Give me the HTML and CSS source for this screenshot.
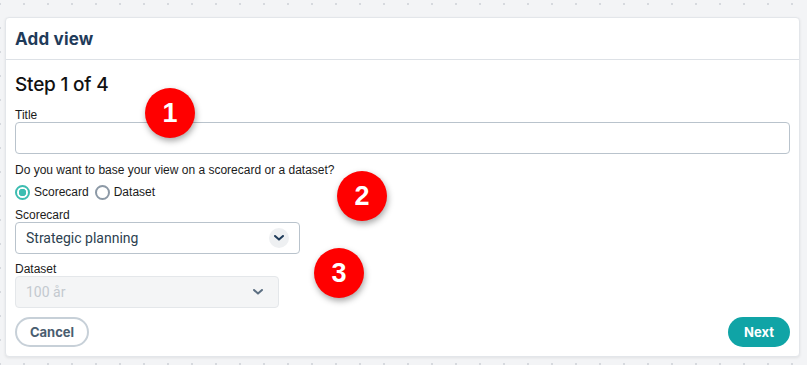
FILE: index.html
```html
<!DOCTYPE html>
<html lang="en">
<head>
  <meta charset="UTF-8" />
  <meta name="viewport" content="width=device-width, initial-scale=1.0"/>
  <title>Add view</title>
  <link rel="stylesheet" href="styles.css">
</head>
<body>
  <div class="dialog">
    <div class="dialog-header">Add view</div>
    <div class="dialog-body">
      <h3 class="step">Step 1 of 4</h3>

      <label class="field-label" for="title">Title</label>
      <input class="text-input" id="title" type="text" />

      <p class="question">Do you want to base your view on a scorecard or a dataset?</p>
      <div class="radio-row">
        <label class="radio checked"><span class="radio-dot"></span>Scorecard</label>
        <label class="radio"><span class="radio-dot"></span>Dataset</label>
      </div>

      <label class="field-label">Scorecard</label>
      <div class="select select-scorecard">
        <span>Strategic planning</span>
        <span class="chevron-bubble">
          <svg viewBox="0 0 10 6" width="10" height="6"><path d="M1 1 L5 4.6 L9 1" fill="none" stroke="#1f3b5a" stroke-width="2" stroke-linecap="round" stroke-linejoin="round"/></svg>
        </span>
      </div>

      <label class="field-label">Dataset</label>
      <div class="select select-dataset">
        <span>100 år</span>
        <span class="chevron-plain">
          <svg viewBox="0 0 10 6" width="10" height="6"><path d="M1 1 L5 4.6 L9 1" fill="none" stroke="#5c6f82" stroke-width="2" stroke-linecap="round" stroke-linejoin="round"/></svg>
        </span>
      </div>

      <div class="actions">
        <button class="btn btn-cancel">Cancel</button>
        <button class="btn btn-next">Next</button>
      </div>
    </div>

    <span class="marker marker-1">1</span>
    <span class="marker marker-2">2</span>
    <span class="marker marker-3">3</span>
  </div>
</body>
</html>
```

FILE: styles.css
```css
body {
  margin: 0;
  padding: 17px 7px 0 5px;
  min-height: 365px;
  box-sizing: border-box;
  background-color: #f3f4f6;
  background-image: radial-gradient(circle, #d6d9de 1px, transparent 1.4px);
  background-size: 24px 24px;
  background-position: -12px -8px;
  font-family: "Liberation Sans", Arial, sans-serif;
  color: #1b1b1b;
}

.dialog {
  position: relative;
  background: #ffffff;
  border: 1px solid #e3e6ea;
  border-radius: 4px;
  box-shadow: 0 1px 3px rgba(0, 0, 0, 0.08);
  height: 340px;
  box-sizing: border-box;
}

.dialog-header {
  height: 41px;
  display: flex;
  align-items: center;
  padding-left: 9px;
  border-bottom: 1px solid #dde1e6;
  font-family: Inter, "Noto Sans", sans-serif;
  font-weight: 700;
  font-size: 17px;
  letter-spacing: 0.2px;
  color: #1f3b5a;
}

.dialog-body {
  display: flex;
  flex-direction: column;
  padding: 0 9px;
}

.step {
  margin: 13px 0 0;
  height: 24px;
  line-height: 24px;
  font-family: Inter, "Noto Sans", sans-serif;
  font-weight: 500;
  font-size: 19px;
  letter-spacing: -0.2px;
  color: #111;
}

.field-label {
  display: block;
  font-size: 12px;
  line-height: 14px;
  height: 14px;
  margin-top: 11px;
}

.text-input {
  margin: 0;
  height: 32px;
  box-sizing: border-box;
  border: 1px solid #b9c3cc;
  border-radius: 4px;
  background: #fff;
}

.question {
  margin: 9px 0 0;
  font-size: 12px;
  line-height: 14px;
}

.radio-row {
  display: flex;
  gap: 6px;
  margin-top: 7px;
  height: 16px;
}

.radio {
  display: flex;
  align-items: center;
  gap: 4px;
  font-size: 12px;
}

.radio-dot {
  width: 15px;
  height: 15px;
  box-sizing: border-box;
  border: 2px solid #8c99a6;
  border-radius: 50%;
  background: #fff;
}

.radio.checked .radio-dot {
  border-color: #3dbdb1;
  background: radial-gradient(circle, #3dbdb1 0 3.5px, #fff 4px);
}

.radio-row + .field-label {
  margin-top: 8px;
}

.select {
  height: 32px;
  box-sizing: border-box;
  display: flex;
  align-items: center;
  justify-content: space-between;
  padding: 0 10px 0 10px;
  border-radius: 4px;
  font-family: Roboto, "Liberation Sans", sans-serif;
  font-size: 14px;
}

.select-scorecard {
  width: 285px;
  border: 1px solid #b9c3cc;
  color: #2d3f50;
}

.select-scorecard + .field-label {
  margin-top: 8px;
}

.select-dataset {
  width: 264px;
  border: 1px solid #e4e7ea;
  background: #f4f5f6;
  color: #c3c9cf;
  padding-right: 15px;
}

.chevron-bubble {
  width: 20px;
  height: 20px;
  border-radius: 50%;
  background: #eef0f2;
  display: flex;
  align-items: center;
  justify-content: center;
}

.chevron-plain {
  display: flex;
}

.actions {
  display: flex;
  justify-content: space-between;
  margin-top: 9px;
}

.btn {
  height: 30px;
  border-radius: 15px;
  font-family: Inter, "Noto Sans", sans-serif;
  font-weight: 700;
  font-size: 13px;
  cursor: pointer;
}

.btn-cancel {
  width: 74px;
  background: #fff;
  border: 2px solid #c7d0d8;
  color: #4a5d70;
}

.btn-next {
  width: 62px;
  background: #10a4a6;
  border: none;
  color: #fff;
}

.marker {
  position: absolute;
  width: 50px;
  height: 50px;
  border-radius: 50%;
  background: #ff0000;
  color: #fff;
  font-family: "Liberation Sans", Arial, sans-serif;
  font-weight: 700;
  font-size: 27px;
  display: flex;
  align-items: center;
  justify-content: center;
  box-shadow: 1px 3px 6px rgba(0, 0, 0, 0.35);
}

.marker-1 { left: 139px; top: 70px; }
.marker-2 { left: 331px; top: 153px; }
.marker-3 { left: 308px; top: 230px; }
```
